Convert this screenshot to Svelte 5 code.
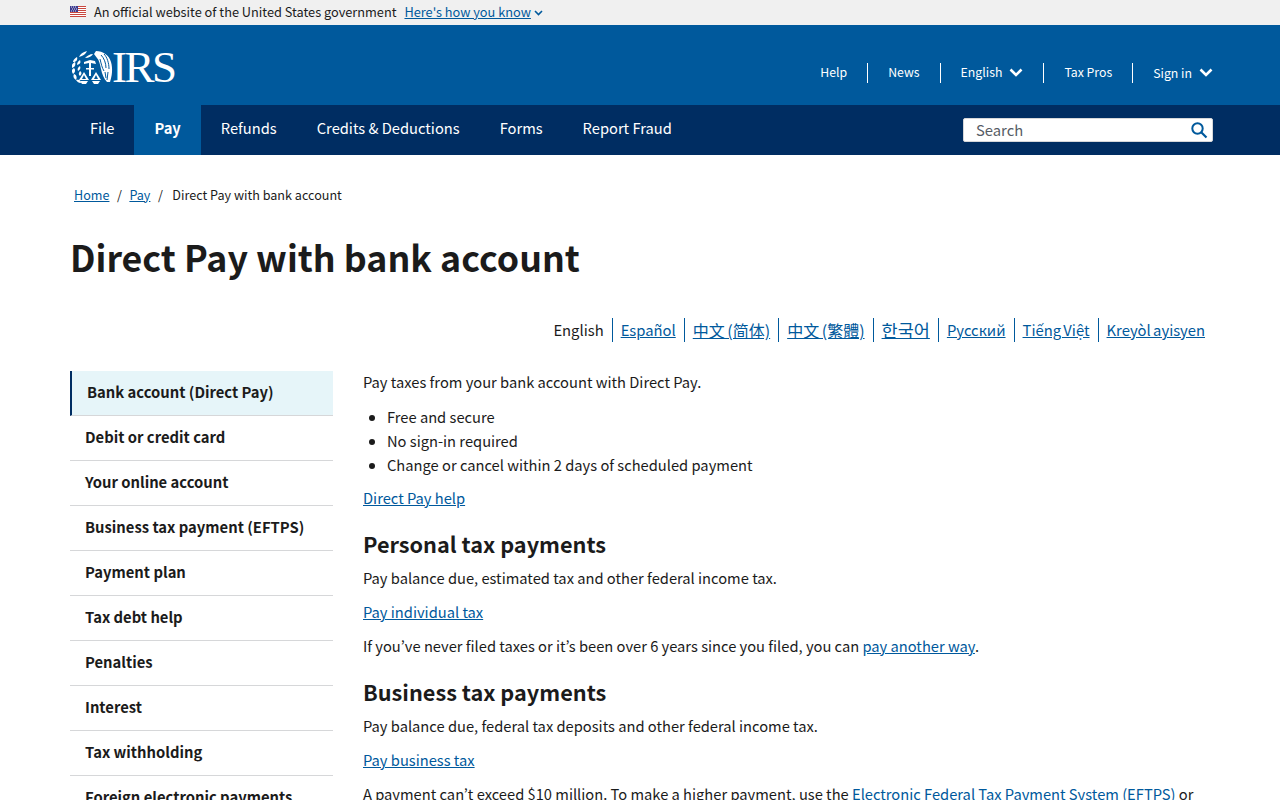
<script lang="ts">
	const topLinks = [
		{ label: 'Help' },
		{ label: 'News' },
		{ label: 'English', menu: true },
		{ label: 'Tax Pros' },
		{ label: 'Sign in', menu: true, low: true },
	];
	const navItems = ['File', 'Pay', 'Refunds', 'Credits & Deductions', 'Forms', 'Report Fraud'];
	const languages = [
		{ label: 'Español' },
		{ label: '中文 (简体)', cjk: 'sc' },
		{ label: '中文 (繁體)', cjk: 'tc' },
		{ label: '한국어', cjk: 'kr' },
		{ label: 'Русский' },
		{ label: 'Tiếng Việt' },
		{ label: 'Kreyòl ayisyen' },
	];
	const sideItems = [
		'Bank account (Direct Pay)',
		'Debit or credit card',
		'Your online account',
		'Business tax payment (EFTPS)',
		'Payment plan',
		'Tax debt help',
		'Penalties',
		'Interest',
		'Tax withholding',
		'Foreign electronic payments',
	];
</script>

<div class="page">
	<div class="banner">
		<div class="wrap banner-row">
			<svg class="flag" width="16" height="11" viewBox="0 0 16 11">
				<rect width="16" height="11" fill="#fff" />
				<path d="M0 .5h16M0 2.500h16M0 4.500h16M0 6.500h16M0 8.500h16M0 10.500h16" stroke="#c8473f" stroke-width="1" />
				<rect width="8" height="6" fill="#3c3b8e" />
				<path d="M1 1h1M3 1h1M5 1h1M2 3h1M4 3h1M6 3h1M1 5h1M3 5h1M5 5h1" stroke="#dfe0ef" stroke-width="1" />
			</svg>
			<span class="official">An official website of the United States government</span>
			<a href="#how" class="how">Here's how you know</a>
			<svg class="how-chev" width="9" height="6" viewBox="0 0 9 6">
				<path d="M1 1l3.500 3.500L8 1" fill="none" stroke="#00599c" stroke-width="1.600" />
			</svg>
		</div>
	</div>

	<header class="top">
		<div class="wrap top-row">
			<a href="#home" class="logo">
				<svg width="41" height="35" viewBox="0 0 41 35">
					<!-- laurel -->
					<g fill="#fff">
						<path d="M7 7c1-3 4-5 8-6-1 3-4 5-8 6z" />
						<path d="M13 8c2-2 5-4 8-4-1 2-4 4-8 4z" />
						<path d="M1 12c0-2 2-4 4-5 1 3-1 5-4 5z" />
						<path d="M0 18c-1-3 1-5 3-6 1 3 0 5-3 6z" />
						<path d="M5 15c0-2 1-4 3-5 1 3 0 4-3 5z" />
						<path d="M1 24c-2-3-1-5 1-6 2 2 1 5-1 6z" />
						<path d="M6 21c-1-2 0-4 2-5 1 2 0 4-2 5z" />
						<path d="M4 30c-3-2-3-4-2-6 3 1 3 4 2 6z" />
						<path d="M8 26c-2-2-1-3 0-5 2 1 2 3 0 5z" />
						<path d="M9 33c-3 0-4-2-5-3 3-1 5 0 5 3z" />
					</g>
					<!-- wing and body -->
					<path d="M24 1c7 0 13 4 15 11 2 7 1 14-1 20l-3 0c-3-3-5-8-6-13-1-5-2-9-4-11l-3-4z" fill="#fff" />
					<path d="M29 5c3 3 5 8 5 13M32 4c3 3 5 9 5 15M28 9c1 4 2 9 4 12M36 22l-1 8M33 22l1 6" stroke="#00599c" stroke-width="1" fill="none" />
					<!-- head and staff -->
					<path d="M12 12l6-2 5 1 1 3-5-1v3h-2v-3l-5 1z" fill="#fff" />
					<rect x="17" y="15" width="2" height="11" fill="#fff" />
					<rect x="14" y="18" width="8" height="1.500" fill="#fff" />
					<!-- scales -->
					<path d="M12 22l-5 8h10zM12 25l-2 4h4z" fill="#fff" fill-rule="evenodd" />
					<path d="M24 22l-5 8h10zM24 25l-2 4h4z" fill="#fff" fill-rule="evenodd" />
					<path d="M8 31h8l-2 3h-4zM20 31h8l-2 3h-4z" fill="#fff" />
				</svg>
				<span class="logo-text">IRS</span>
			</a>
			<nav class="top-links">
				{#each topLinks as link, i}
					{#if i > 0}<span class="top-sep"></span>{/if}
					<a href="#top" class="top-link" class:low={link.low}>
						{link.label}
						{#if link.menu}
							<svg class="chev" width="14" height="9" viewBox="0 0 14 9">
								<path d="M1.500 1.500L7 7l5.500-5.500" fill="none" stroke="#fff" stroke-width="2.600" />
							</svg>
						{/if}
					</a>
				{/each}
			</nav>
		</div>
	</header>

	<div class="mainnav">
		<div class="wrap nav-row">
			<nav class="nav-items">
				{#each navItems as item}
					<a href="#nav" class="nav-item" class:current={item === 'Pay'}>{item}</a>
				{/each}
			</nav>
			<div class="search">
				<span class="search-label">Search</span>
				<svg width="18" height="18" viewBox="0 0 18 18">
					<circle cx="7.500" cy="7.500" r="5.200" fill="none" stroke="#00599c" stroke-width="2" />
					<path d="M11.500 11.500l5 5" stroke="#00599c" stroke-width="2.200" />
				</svg>
			</div>
		</div>
	</div>

	<div class="wrap content">
		<div class="crumbs">
			<a href="#home">Home</a>
			<span class="slash">/</span>
			<a href="#pay">Pay</a>
			<span class="slash">/</span>
			<span class="crumb-now">Direct Pay with bank account</span>
		</div>

		<h1>Direct Pay with bank account</h1>

		<div class="langs">
			<span class="lang">English</span>
			{#each languages as lang}
				<a href="#lang" class="lang {lang.cjk ?? ''}">{lang.label}</a>
			{/each}
		</div>

		<div class="columns">
			<aside class="side">
				{#each sideItems as item, i}
					<a href="#side" class="side-item" class:active={i === 0}>{item}</a>
				{/each}
			</aside>

			<main class="body">
				<p class="lead">Pay taxes from your bank account with Direct Pay.</p>
				<ul>
					<li>Free and secure</li>
					<li>No sign-in required</li>
					<li>Change or cancel within 2 days of scheduled payment</li>
				</ul>
				<p><a href="#help">Direct Pay help</a></p>

				<h2>Personal tax payments</h2>
				<p>Pay balance due, estimated tax and other federal income tax.</p>
				<p><a href="#ind">Pay individual tax</a></p>
				<p>If you’ve never filed taxes or it’s been over 6 years since you filed, you can <a href="#other">pay another way</a>.</p>

				<h2>Business tax payments</h2>
				<p>Pay balance due, federal tax deposits and other federal income tax.</p>
				<p><a href="#biz">Pay business tax</a></p>
				<p>A payment can’t exceed $10 million. To make a higher payment, use the <a href="#eftps">Electronic Federal Tax Payment System (EFTPS)</a> or</p>
			</main>
		</div>
	</div>
</div>

<style>
	:global(body) {
		font-family: "Noto Sans CJK KR", "Liberation Sans", sans-serif;
		color: #1b1b1b;
		background: #fff;
	}

	.page {
		height: 800px;
		overflow: hidden;
	}

	.wrap {
		width: 1143px;
		margin-left: 70px;
	}

	a {
		color: #00599c;
	}

	.banner {
		height: 25px;
		background: #f0f0f0;
	}

	.banner-row {
		display: flex;
		align-items: center;
		height: 23px;
		font-size: 12.750px;
		line-height: 23px;
	}

	.flag {
		margin-right: 8px;
	}

	.official {
		margin-right: 8px;
	}

	.how-chev {
		margin: 3px 0 0 3px;
	}

	.top {
		height: 80px;
		background: #00599c;
	}

	.top-row {
		display: flex;
		justify-content: space-between;
		height: 80px;
	}

	.logo {
		display: flex;
		height: 35px;
		margin: 25px 0 0 2px;
		color: #fff;
		text-decoration: none;
	}

	.logo-text {
		margin-left: -1px;
		font-family: "Liberation Serif", serif;
		font-size: 45px;
		line-height: 35px;
		letter-spacing: -2.500px;
	}

	.top-links {
		display: flex;
		align-items: center;
		height: 20px;
		margin-top: 38px;
	}

	.top-link {
		display: flex;
		align-items: center;
		gap: 7px;
		padding: 0 20px 2px;
		color: #fff;
		font-size: 12.300px;
		line-height: 20px;
		text-decoration: none;
	}

	.top-link:last-child {
		padding-right: 0;
	}

	.top-link.low {
		padding-top: 1px;
	}

	.top-sep {
		width: 1px;
		height: 20px;
		background: #fff;
	}

	.mainnav {
		height: 50px;
		background: #002d62;
	}

	.nav-row {
		display: flex;
		justify-content: space-between;
		height: 50px;
	}

	.nav-items {
		display: flex;
	}

	.nav-item {
		padding: 0 20px;
		color: #fff;
		font-size: 14.700px;
		line-height: 46px;
		text-decoration: none;
	}

	.nav-item.current {
		background: #00599c;
		font-weight: 700;
	}

	.search {
		display: flex;
		align-items: center;
		justify-content: space-between;
		box-sizing: border-box;
		width: 250px;
		height: 24px;
		margin-top: 13px;
		padding: 0 4px 0 12px;
		background: #fff;
		border: 1px solid #d6d7d9;
		border-radius: 2px;
	}

	.search-label {
		color: #565c65;
		font-size: 14.800px;
		line-height: 22px;
	}

	.crumbs {
		display: flex;
		padding: 30px 0 0 4px;
		font-size: 12.600px;
		line-height: 20px;
	}

	.slash {
		margin: 0 7.500px;
	}

	.crumb-now {
		margin-left: 2px;
	}

	h1 {
		margin: 27px 0 0;
		font-size: 35.750px;
		font-weight: 700;
		line-height: 50px;
	}

	.langs {
		display: flex;
		justify-content: flex-end;
		margin-top: 36px;
		font-size: 14.800px;
		line-height: 24px;
		word-spacing: -1px;
	}

	.lang {
		padding: 0 8px;
		border-left: 1px solid #00599c;
	}

	.lang:first-child {
		border-left: 0;
	}

	.lang.sc {
		font-family: "Noto Sans CJK SC", sans-serif;
		font-size: 16px;
	}

	.lang.tc {
		font-family: "Noto Sans CJK TC", sans-serif;
		font-size: 16px;
	}

	.lang.kr {
		font-size: 17.500px;
	}

	.columns {
		display: flex;
		gap: 30px;
		margin-top: 29px;
	}

	.side {
		flex: none;
		width: 263px;
	}

	.side-item {
		display: block;
		box-sizing: border-box;
		height: 45px;
		padding: 0 15px;
		color: #1b1b1b;
		border-bottom: 1px solid #d6d7d9;
		font-size: 14.800px;
		font-weight: 700;
		line-height: 42px;
		text-decoration: none;
		white-space: nowrap;
	}

	.side-item.active {
		background: #e6f5f9;
		border-left: 2px solid #002d62;
	}

	.body {
		flex: 1;
		margin-top: -1px;
		font-size: 14.700px;
		line-height: 24px;
	}

	p {
		margin: 0 0 10px;
	}

	.lead {
		margin-bottom: 11px;
	}

	ul {
		margin: 0 0 9px;
		padding-left: 24px;
	}

	h2 {
		margin: 20px 0 8px;
		font-size: 21.700px;
		font-weight: 700;
		line-height: 28px;
	}
</style>
